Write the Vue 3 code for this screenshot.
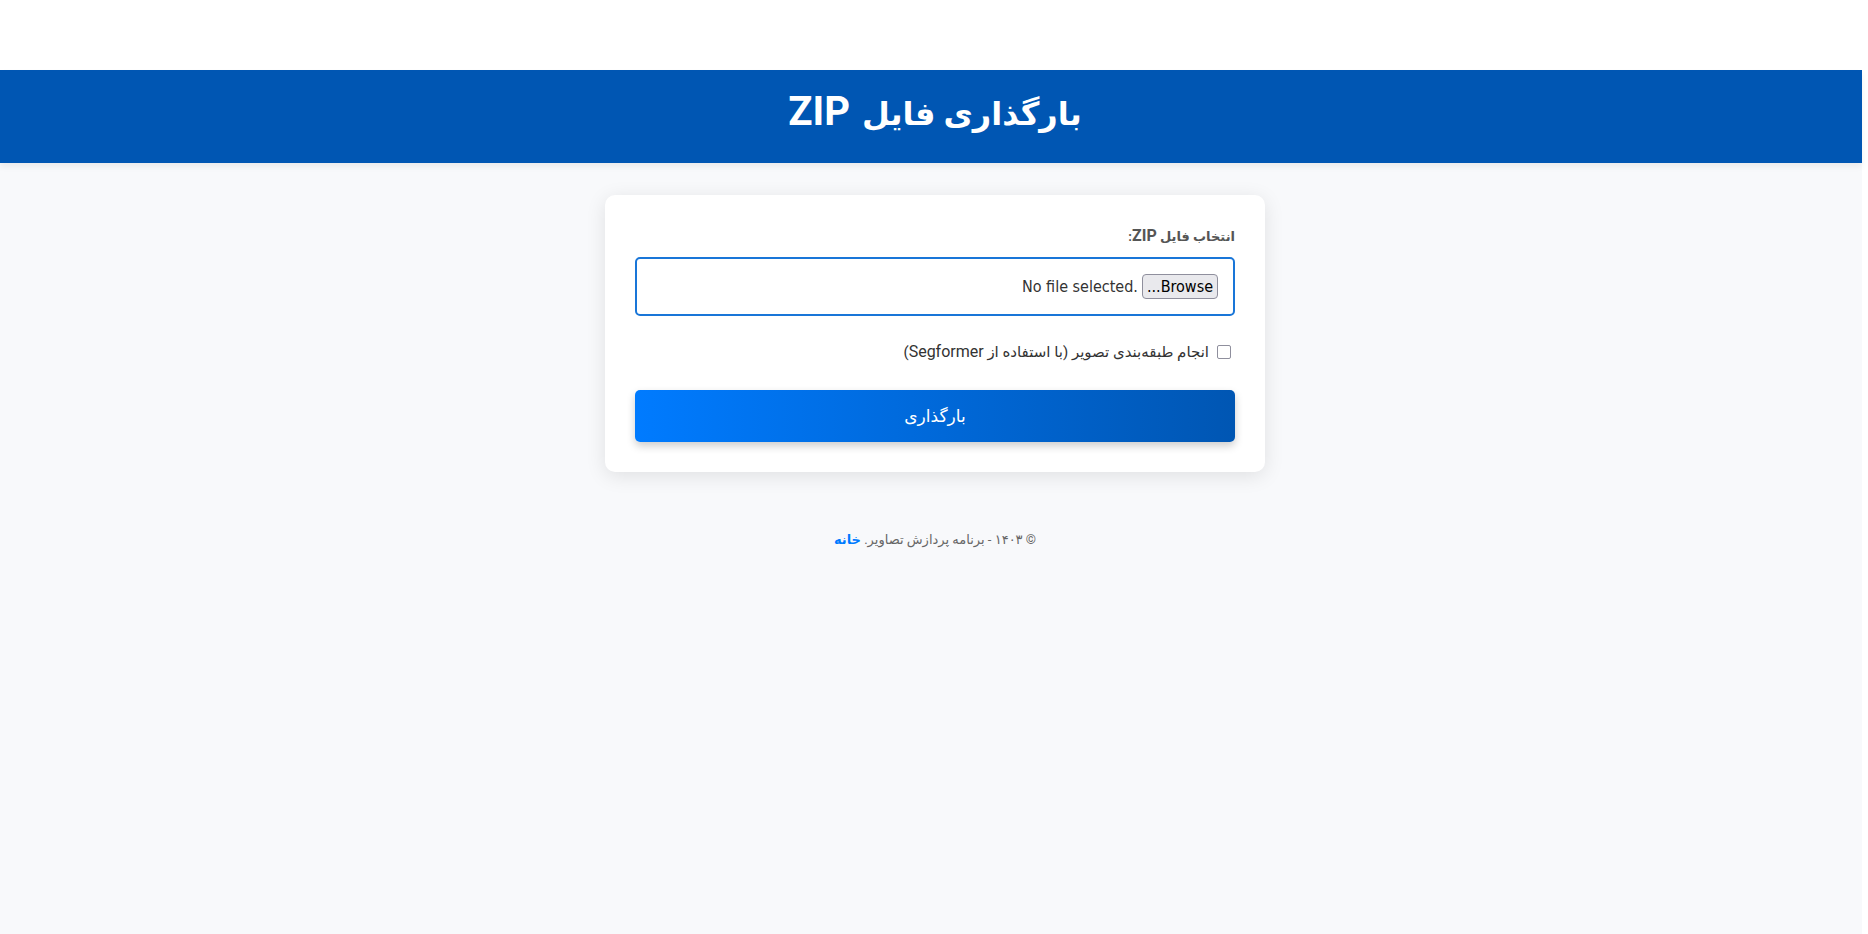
<script setup>
import { ref } from 'vue'

const fileName = ref('No file selected.')
const segment = ref(false)

function onFile(event) {
  const file = event.target.files[0]
  fileName.value = file ? file.name : 'No file selected.'
}
</script>

<template>
  <div class="page" dir="rtl" lang="fa">
    <header class="banner">
      <h1 class="title">بارگذاری فایل <span class="latin">ZIP</span></h1>
    </header>
    <main class="main">
      <form class="card" @submit.prevent>
        <label class="field-label" for="zip">انتخاب فایل <span class="latin">ZIP</span>:</label>
        <div class="file-box">
          <span class="browse">Browse...</span>
          <span class="file-name" dir="ltr">{{ fileName }}</span>
          <input id="zip" class="file-input" type="file" accept=".zip" @change="onFile" />
        </div>
        <div class="check-row">
          <input id="segment" v-model="segment" class="check" type="checkbox" />
          <label for="segment">انجام طبقه‌بندی تصویر (با استفاده از <span class="latin">Segformer</span>)</label>
        </div>
        <button class="submit" type="submit">بارگذاری</button>
      </form>
    </main>
    <footer class="footer">
      <p class="footer-text">© ۱۴۰۳ - برنامه پردازش تصاویر. <a class="home" href="#">خانه</a></p>
    </footer>
  </div>
</template>

<style>
body {
  margin: 0;
  background: #ffffff;
}
</style>

<style scoped>
.page {
  box-sizing: border-box;
  min-height: calc(100vh - 70px);
  margin: 70px 6px 0 0;
  background: #f8f9fb;
  color: #333333;
  font-family: Roboto, "DejaVu Sans", sans-serif;
  font-size: 15px;
  line-height: 24px;
}

.latin {
  font-size: 16px;
  line-height: 1;
}

.banner {
  box-sizing: border-box;
  padding: 18px 0 22px 8px;
  background: #0056b3;
  color: #ffffff;
  text-align: center;
  box-shadow: 0 4px 6px rgba(0, 0, 0, 0.06);
}

.title {
  margin: 0;
  font-size: 32px;
  font-weight: 700;
  line-height: 53px;
}

.title .latin {
  margin-inline-start: 4px;
  font-size: 40px;
}

.main {
  display: flex;
  justify-content: center;
  padding: 32px 0 0 8px;
}

.card {
  box-sizing: border-box;
  width: 100%;
  max-width: 660px;
  padding: 30px;
  border-radius: 10px;
  background: #ffffff;
  box-shadow: 0 4px 20px rgba(0, 0, 0, 0.1);
}

.field-label {
  display: block;
  margin-bottom: 8px;
  color: #555555;
  font-size: 13px;
  font-weight: 700;
}

.file-box {
  position: relative;
  box-sizing: border-box;
  display: flex;
  align-items: center;
  gap: 4px;
  height: 59px;
  padding: 0 15px;
  border: 2px solid #1976d8;
  border-radius: 5px;
  font-family: "DejaVu Sans Condensed", "Noto Sans", sans-serif;
  font-size: 16px;
}

.browse {
  box-sizing: border-box;
  padding: 0 4px;
  border: 1px solid #8f8f9d;
  border-radius: 4px;
  background: #e9e9ed;
  color: #000000;
  line-height: 23px;
}

.file-input {
  position: absolute;
  inset: 0;
  width: 100%;
  opacity: 0;
  cursor: pointer;
}

.check-row {
  display: flex;
  align-items: center;
  gap: 8px;
  margin-top: 24px;
}

.check {
  appearance: none;
  box-sizing: border-box;
  width: 14px;
  height: 14px;
  margin: 0 4px 0 0;
  border: 1px solid #8f8f9d;
  border-radius: 2px;
  background: #ffffff;
}

.check:checked {
  background: #0056b3;
}

.submit {
  display: block;
  width: 100%;
  height: 52px;
  margin-top: 26px;
  padding: 0;
  border: 0;
  border-radius: 5px;
  background: linear-gradient(to left, #0056b3, #007bff);
  color: #ffffff;
  font-family: inherit;
  font-size: 17px;
  box-shadow: 0 4px 8px rgba(0, 0, 0, 0.2);
  cursor: pointer;
}

.footer {
  padding: 56px 0 20px 8px;
  color: #666666;
  text-align: center;
  font-size: 13px;
}

.footer-text {
  margin: 0;
}

.home {
  color: #007bff;
  font-weight: 700;
  text-decoration: none;
}
</style>
